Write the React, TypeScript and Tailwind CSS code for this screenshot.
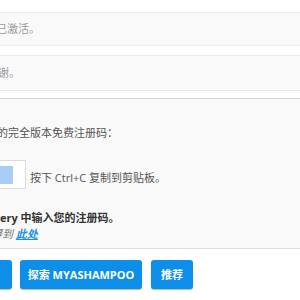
export default function App() {
  return (
    <div className="w-[300px] h-[300px] overflow-hidden bg-white pt-[12px] font-['Open_Sans','Noto_Sans_CJK_SC',sans-serif] text-[11px] leading-[16px]">
      <div className="h-[34px] border-y border-[#ebebeb] bg-[#f9f9f9] flex items-center text-[#999] whitespace-nowrap">
        <span className="ml-[-4px]">已激活。</span>
      </div>
      <div className="mt-[9px] h-[36px] border-y border-[#ebebeb] bg-[#f9f9f9] flex items-center text-[#999] whitespace-nowrap">
        <span className="ml-[-2px]">谢。</span>
      </div>
      <div className="mt-[7px] h-[151px] border-t border-[#d6d6d6] border-b border-b-[#dedede] bg-[#f9f9f9] pt-[26px] whitespace-nowrap">
        <div className="ml-[-3px] text-[#555]">的完全版本免费注册码：</div>
        <div className="mt-[19px] flex items-center">
          <div className="ml-[-20px] w-[46px] h-[29px] border border-[#dcdcdc] bg-white flex items-center px-[4px]">
            <div className="w-[28px] h-[18px] bg-[#a9cdf5]" />
          </div>
          <span className="ml-[4px] mt-[6px] text-[#555]">按下 Ctrl+C 复制到剪贴板。</span>
        </div>
        <div className="mt-[21px] font-bold text-[#333]">ery 中输入您的注册码。</div>
        <div className="italic text-[#777]">
          <span className="ml-[-9px]">得到</span>{" "}
          <a className="text-[#1a8fe3] underline font-semibold" href="#">此处</a>
        </div>
      </div>
      <div className="mt-[11px] flex gap-[8px] whitespace-nowrap">
        <button className="ml-[-60px] h-[29px] w-[72px] rounded-[3px] bg-[#0c8ee9] shadow-[0_1px_1px_rgba(0,0,0,0.3)] text-white font-bold text-[11px]">
          购买
        </button>
        <button className="h-[29px] w-[122px] rounded-[3px] bg-[#0c8ee9] shadow-[0_1px_1px_rgba(0,0,0,0.3)] text-white font-bold text-[11px]">
          探索 MYASHAMPOO
        </button>
        <button className="ml-[1px] h-[29px] w-[42px] rounded-[3px] bg-[#0c8ee9] shadow-[0_1px_1px_rgba(0,0,0,0.3)] text-white font-bold text-[11px]">
          推荐
        </button>
      </div>
    </div>
  );
}
